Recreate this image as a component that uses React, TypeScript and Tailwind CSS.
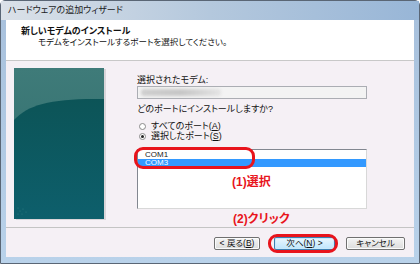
import React from 'react';

const jp = "font-['Liberation_Sans','Noto_Sans_CJK_JP',sans-serif] [font-feature-settings:'palt']";

const Radio: React.FC<{ checked?: boolean; label: React.ReactNode }> = ({ checked, label }) => (
  <div className="flex h-[10px] items-center">
    <span className="ml-[2px] flex h-[7px] w-[7px] items-center justify-center rounded-full border border-[#8a8a8a] bg-white">
      {checked && <span className="h-[3px] w-[3px] rounded-full bg-[#222]" />}
    </span>
    <span className="ml-[5px] text-[9px] leading-[10px] text-[#111]">{label}</span>
  </div>
);

const Btn: React.FC<{ w: string; primary?: boolean; children: React.ReactNode }> = ({ w, primary, children }) => (
  <div
    className={`${w} flex h-[13px] items-center justify-center rounded-[2px] border text-[8.5px] leading-none text-[#111] ${
      primary
        ? 'border-[#3c7fb1] bg-gradient-to-b from-[#eaf6fd] to-[#bee6fd] shadow-[inset_0_0_0_1px_#c9e9fb]'
        : 'border-[#707070] bg-gradient-to-b from-[#f4f4f4] to-[#dcdcdc] shadow-[inset_0_0_0_1px_#fbfbfb]'
    }`}
  >
    {children}
  </div>
);

const SidePanel = () => (
  <div className="relative h-[151px] w-[90px] shadow-[2px_1px_0_#d9d5d9]">
    <svg width="90" height="151" viewBox="0 0 90 151" className="block">
      <defs>
        <linearGradient id="tl" x1="0" y1="0" x2="0" y2="1">
          <stop offset="0" stopColor="#3f7b79" />
          <stop offset="1" stopColor="#2f6e6e" />
        </linearGradient>
        <linearGradient id="bd" x1="0" y1="0" x2="0" y2="1">
          <stop offset="0" stopColor="#0c5457" />
          <stop offset="1" stopColor="#0d5f6c" />
        </linearGradient>
      </defs>
      <rect width="90" height="151" fill="url(#tl)" />
      <path d="M0 52 C 14 36, 40 30, 90 31 L 90 151 L 0 151 Z" fill="url(#bd)" />
      <g fill="#2f7a80">
        <circle cx="4" cy="140" r="0.6" />
        <circle cx="6" cy="143" r="0.6" />
        <circle cx="9" cy="141" r="0.6" />
        <circle cx="4" cy="146" r="0.6" />
        <circle cx="8" cy="146" r="0.6" />
        <circle cx="12" cy="144" r="0.6" />
      </g>
    </svg>
  </div>
);

export default function App() {
  return (
    <div className={`relative h-[264px] w-[420px] overflow-hidden ${jp}`}>
      <div className="flex h-full w-full flex-col rounded-t-[5px] border border-[#5a6675] bg-gradient-to-b from-[#a7c0dc] to-[#b9d2ea]">
        {/* title bar */}
        <div className="flex h-[19px] items-center bg-gradient-to-r from-[#dbe1e8] via-[#b4c8dd] to-[#98b6d7] pl-[7px]">
          <span className="text-[9px] leading-none text-[#1b1b1b]">ハードウェアの追加ウィザード</span>
        </div>
        {/* client */}
        <div className="mx-[5px] flex flex-1 flex-col">
          <div className="h-[41px] border-b border-[#c8c8c8] bg-white pl-[15px] pt-[6px]">
            <div className="text-[9px] font-bold leading-[11px] text-[#111]">新しいモデムのインストール</div>
            <div className="pl-[17px] text-[8.5px] leading-[11px] text-[#111]">モデムをインストールするポートを選択してください。</div>
          </div>
          <div className="flex h-[166px] bg-[#f5f0f5] pl-[8px] pt-[7px]">
            <SidePanel />
            <div className="ml-[33px] flex flex-col pt-[7px]">
              <div className="h-[10px] text-[9px] leading-[10px] text-[#111]">選択されたモデム:</div>
              <div className="mt-[1px] flex h-[13px] w-[230px] items-center border border-[#abadb3] bg-[#f3f3f3] pl-[3px]">
                <div className="h-[7px] w-[80px] rounded-[3px] bg-gradient-to-r from-[#cfcfcf] via-[#c6c6c6] to-[#e4e4e4] blur-[1.5px]" />
              </div>
              <div className="mt-[5px] h-[10px] text-[9px] leading-[10px] text-[#111]">どのポートにインストールしますか?</div>
              <div className="mt-[7px]">
                <Radio label={<>すべてのポート(<u>A</u>)</>} />
                <Radio checked label={<>選択したポート(<u>S</u>)</>} />
              </div>
              <div className="mt-[8px] h-[60px] w-[230px] border border-[#828790] border-b-[#d8d8d8] border-r-[#d8d8d8] bg-white pt-[1px]">
                <div className="h-[8px] pl-[7px] text-[8px] leading-[8px] text-[#222]">COM1</div>
                <div className="h-[8px] bg-[#3399ff] pl-[7px] text-[8px] leading-[8px] text-white">COM3</div>
              </div>
            </div>
          </div>
          <div className="flex h-[30px] items-center justify-end border-t border-[#c4c4c4] bg-[#f5f0f5] pr-[9px] pt-[1px]">
            <Btn w="w-[46px]">&lt; 戻る(<u>B</u>)</Btn>
            <div className="w-[14px]" />
            <Btn w="w-[61px]" primary>次へ(<u>N</u>) &gt;</Btn>
            <div className="w-[11px]" />
            <Btn w="w-[59px]">キャンセル</Btn>
          </div>
        </div>
        <div className="h-[5px]" />
      </div>

      {/* annotations */}
      <div className="absolute left-[134px] top-[147px] h-[22px] w-[121px] rounded-[9px] border-[3px] border-[#e8141c]" />
      <div className="absolute left-[232px] top-[175px] text-[12px] font-bold leading-[14px] text-[#e8141c]">(1)選択</div>
      <div className="absolute left-[233px] top-[212px] text-[12px] font-bold leading-[14px] text-[#e8141c]">(2)クリック</div>
      <div className="absolute left-[268px] top-[234px] h-[19px] w-[70px] rounded-[9px] border-[3px] border-[#e8141c]" />
    </div>
  );
}
